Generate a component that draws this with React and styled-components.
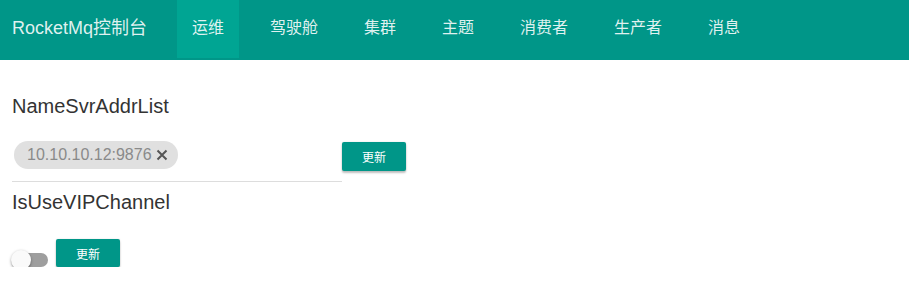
import React, { useState } from 'react';
import styled, { createGlobalStyle } from 'styled-components';

const GlobalStyle = createGlobalStyle`
  body {
    margin: 0;
    background: #fff;
    font-family: "Liberation Sans", Arial, "Noto Sans CJK SC", sans-serif;
  }
`;

const NavBar = styled.div`
  display: flex;
  align-items: flex-start;
  height: 60px;
  background: #009688;
  color: rgba(255, 255, 255, 0.88);
`;

const Brand = styled.div`
  width: 177px;
  box-sizing: border-box;
  padding-left: 12px;
  height: 58px;
  line-height: 56px;
  font-size: 18px;
  white-space: nowrap;
`;

const Tabs = styled.div`
  display: flex;
  gap: 16px;
`;

const Tab = styled.div`
  height: 58px;
  line-height: 56px;
  padding: 0 15px;
  font-size: 16px;
  white-space: nowrap;
  background: ${(p) => (p.active ? '#00a593' : 'transparent')};
`;

const Content = styled.div`
  padding: 0 12px;
`;

const Title = styled.div`
  font-size: 20px;
  line-height: 24px;
  color: #333;
  margin-top: ${(p) => p.top}px;
`;

const Row = styled.div`
  display: flex;
  align-items: flex-start;
`;

const ChipField = styled.div`
  width: 330px;
  box-sizing: border-box;
  padding: 23px 0 12px 2px;
  border-bottom: 1px solid #ddd;
`;

const Chip = styled.span`
  display: inline-flex;
  align-items: center;
  height: 28px;
  padding: 0 10px 0 13px;
  border-radius: 14px;
  background: #e0e0e0;
  color: #8a8a8a;
  font-size: 16px;
`;

const ChipClose = styled.span`
  display: inline-flex;
  margin-left: 4px;
  color: #555;
`;

const Button = styled.button`
  width: 64px;
  height: ${(p) => p.h}px;
  margin-top: ${(p) => p.top}px;
  border: none;
  border-radius: 2px;
  background: #009688;
  color: #fff;
  font-family: inherit;
  font-size: 12px;
  cursor: pointer;
  box-shadow: 0 2px 2px rgba(0, 0, 0, 0.24), 0 0 2px rgba(0, 0, 0, 0.12);
`;

const SwitchTrack = styled.div`
  position: relative;
  width: 34px;
  height: 14px;
  margin: 39px 8px 0 2px;
  border-radius: 7px;
  background: ${(p) => (p.on ? 'rgba(0,150,136,0.5)' : '#9e9e9e')};
  cursor: pointer;
`;

const SwitchThumb = styled.div`
  position: absolute;
  top: -3px;
  left: ${(p) => (p.on ? '17px' : '-3px')};
  width: 20px;
  height: 20px;
  border-radius: 50%;
  background: ${(p) => (p.on ? '#009688' : '#fafafa')};
  box-shadow: 0 1px 3px rgba(0, 0, 0, 0.35), 0 1px 1px rgba(0, 0, 0, 0.14);
`;

const tabs = ['运维', '驾驶舱', '集群', '主题', '消费者', '生产者', '消息'];

export default function App() {
  const [vip, setVip] = useState(false);

  return (
    <>
      <GlobalStyle />
      <NavBar>
        <Brand>RocketMq控制台</Brand>
        <Tabs>
          {tabs.map((t, i) => (
            <Tab key={t} active={i === 0}>
              {t}
            </Tab>
          ))}
        </Tabs>
      </NavBar>
      <Content>
        <Title top={34}>NameSvrAddrList</Title>
        <Row>
          <ChipField>
            <Chip>
              10.10.10.12:9876
              <ChipClose>
                <svg width="12" height="12" viewBox="0 0 12 12">
                  <path d="M1.5 1.5 L10.5 10.5 M10.5 1.5 L1.5 10.5" stroke="currentColor" strokeWidth="2" />
                </svg>
              </ChipClose>
            </Chip>
          </ChipField>
          <Button h={29} top={24}>更新</Button>
        </Row>
        <Title top={8}>IsUseVIPChannel</Title>
        <Row>
          <SwitchTrack on={vip} onClick={() => setVip(!vip)}>
            <SwitchThumb on={vip} />
          </SwitchTrack>
          <Button h={28} top={25}>更新</Button>
        </Row>
      </Content>
    </>
  );
}
